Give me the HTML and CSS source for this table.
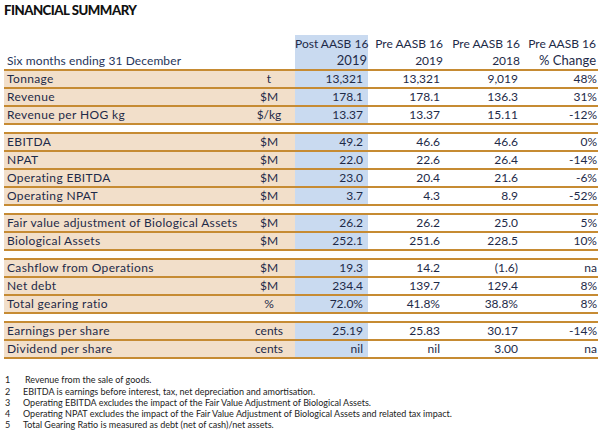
FILE: index.html
```html
<!DOCTYPE html>
<html>
<head>
<meta charset="utf-8">
<link rel="stylesheet" href="styles.css">
</head>
<body>
<div class="page">
  <h1 class="title">FINANCIAL SUMMARY</h1>
  <table class="fin">
    <colgroup>
      <col class="c-label"><col class="c-unit"><col class="c-post"><col class="c-pre19"><col class="c-pre18"><col class="c-chg">
    </colgroup>
    <thead>
      <tr class="h1">
        <th></th><th></th>
        <th class="post">Post AASB 16</th>
        <th>Pre AASB 16</th>
        <th>Pre AASB 16</th>
        <th>Pre AASB 16</th>
      </tr>
      <tr class="h2">
        <th class="lbl">Six months ending 31 December</th><th></th>
        <th class="post big">2019</th>
        <th>2019</th>
        <th>2018</th>
        <th class="big">% Change</th>
      </tr>
    </thead>
    <tbody>
      <tr><td class="lbl">Tonnage</td><td class="unit">t</td><td class="post">13,321</td><td>13,321</td><td>9,019</td><td>48%</td></tr>
      <tr><td class="lbl">Revenue</td><td class="unit">$M</td><td class="post">178.1</td><td>178.1</td><td>136.3</td><td>31%</td></tr>
      <tr><td class="lbl">Revenue per HOG kg</td><td class="unit">$/kg</td><td class="post">13.37</td><td>13.37</td><td>15.11</td><td>-12%</td></tr>
      <tr class="gap"><td colspan="6"></td></tr>
      <tr class="first"><td class="lbl">EBITDA</td><td class="unit">$M</td><td class="post">49.2</td><td>46.6</td><td>46.6</td><td>0%</td></tr>
      <tr><td class="lbl">NPAT</td><td class="unit">$M</td><td class="post">22.0</td><td>22.6</td><td>26.4</td><td>-14%</td></tr>
      <tr><td class="lbl">Operating EBITDA</td><td class="unit">$M</td><td class="post">23.0</td><td>20.4</td><td>21.6</td><td>-6%</td></tr>
      <tr><td class="lbl">Operating NPAT</td><td class="unit">$M</td><td class="post">3.7</td><td>4.3</td><td>8.9</td><td>-52%</td></tr>
      <tr class="gap"><td colspan="6"></td></tr>
      <tr class="first"><td class="lbl">Fair value adjustment of Biological Assets</td><td class="unit">$M</td><td class="post">26.2</td><td>26.2</td><td>25.0</td><td>5%</td></tr>
      <tr><td class="lbl">Biological Assets</td><td class="unit">$M</td><td class="post">252.1</td><td>251.6</td><td>228.5</td><td>10%</td></tr>
      <tr class="gap"><td colspan="6"></td></tr>
      <tr class="first"><td class="lbl">Cashflow from Operations</td><td class="unit">$M</td><td class="post">19.3</td><td>14.2</td><td>(1.6)</td><td>na</td></tr>
      <tr><td class="lbl">Net debt</td><td class="unit">$M</td><td class="post">234.4</td><td>139.7</td><td>129.4</td><td>8%</td></tr>
      <tr><td class="lbl">Total gearing ratio</td><td class="unit">%</td><td class="post">72.0%</td><td>41.8%</td><td>38.8%</td><td>8%</td></tr>
      <tr class="gap"><td colspan="6"></td></tr>
      <tr class="first"><td class="lbl">Earnings per share</td><td class="unit">cents</td><td class="post">25.19</td><td>25.83</td><td>30.17</td><td>-14%</td></tr>
      <tr><td class="lbl">Dividend per share</td><td class="unit">cents</td><td class="post">nil</td><td>nil</td><td>3.00</td><td>na</td></tr>
    </tbody>
  </table>
  <ol class="notes">
    <li><span class="n">1</span><span class="t first-t">Revenue from the sale of goods.</span></li>
    <li><span class="n">2</span><span class="t">EBITDA is earnings before interest, tax, net depreciation and amortisation.</span></li>
    <li><span class="n">3</span><span class="t">Operating EBITDA excludes the impact of the Fair Value Adjustment of Biological Assets.</span></li>
    <li><span class="n">4</span><span class="t">Operating NPAT excludes the impact of the Fair Value Adjustment of Biological Assets and related tax impact.</span></li>
    <li><span class="n">5</span><span class="t">Total Gearing Ratio is measured as debt (net of cash)/net assets.</span></li>
  </ol>
</div>
</body>
</html>
```

FILE: styles.css
```css
* { box-sizing: border-box; }
body {
  margin: 0;
  background: #ffffff;
  font-family: Lato, "Open Sans", sans-serif;
  color: #1e2a48;
}
.page {
  padding: 1px 4px 0 4px;
  width: 602px;
}
.title {
  margin: 0;
  font-size: 13.2px;
  font-weight: 900;
  line-height: 18px;
  letter-spacing: -0.5px;
  color: #111111;
  height: 34px;
}
.fin {
  border-collapse: separate;
  border-spacing: 0;
  table-layout: fixed;
  width: 594px;
  font-size: 12px;
}
.c-label { width: 239px; }
.c-unit { width: 52px; }
.c-post { width: 73px; }
.c-pre19 { width: 77px; }
.c-pre18 { width: 77px; }
.c-chg { width: 76px; }

.fin th {
  font-weight: 400;
  text-align: right;
  padding: 0 2px 0 0;
  line-height: 17px;
  white-space: nowrap;
}
.fin th.post { background: #c9daf0; padding-right: 1px; }
.fin th.big { font-size: 13px; }
.fin th.lbl {
  text-align: left;
  padding-left: 3px;
  letter-spacing: 0.1px;
  color: #27355a;
}
.h2 th { border-bottom: 2px solid #c68b33; }

.fin td {
  padding: 0 5px 0 0;
  text-align: right;
  line-height: 16px;
  border-bottom: 2px solid #c68b33;
  white-space: nowrap;
}
.fin tr.first td { border-top: 2px solid #c68b33; }
.fin td.lbl {
  text-align: left;
  padding-left: 3px;
  background: #f2dfca;
  letter-spacing: 0.35px;
}
.fin td.unit {
  text-align: center;
  padding: 0;
  background: #f2dfca;
}
.fin td.post { background: #c9daf0; padding-right: 5px; }
.fin td:nth-child(4) { padding-right: 5px; }
.fin td:nth-child(5) { padding-right: 4px; }
.fin td:nth-child(6) { padding-right: 1px; }
.fin tr.gap td {
  height: 7px;
  line-height: 7px;
  padding: 0;
  border-bottom: none;
  background: #ffffff;
}

.notes {
  list-style: none;
  margin: 15px 0 0 0;
  padding: 0;
  font-size: 9px;
  color: #222222;
}
.notes li {
  display: flex;
  line-height: 11px;
}
.notes li:first-child { margin-bottom: 1px; }
.notes .n { width: 19px; padding-left: 1px; }
.notes .first-t { padding-left: 2px; }
```
